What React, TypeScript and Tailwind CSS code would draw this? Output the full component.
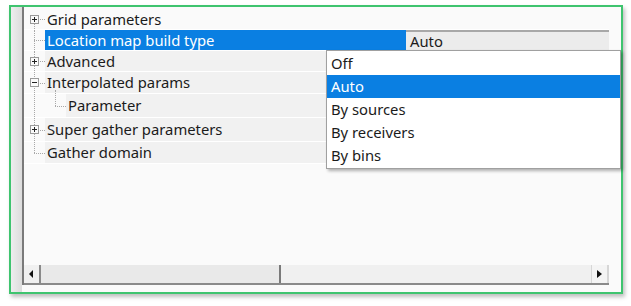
import React from "react";

type Row = {
  label: string;
  depth: number;
  icon?: "plus" | "minus";
  h: string;
  selected?: boolean;
  value?: string;
  first?: boolean;
  last?: boolean;
};

const rows: Row[] = [
  { label: "Grid parameters", depth: 0, icon: "plus", h: "h-[21px]", first: true },
  { label: "Location map build type", depth: 0, h: "h-[21px]", selected: true, value: "Auto" },
  { label: "Advanced", depth: 0, icon: "plus", h: "h-[21px]" },
  { label: "Interpolated params", depth: 0, icon: "minus", h: "h-[22px]" },
  { label: "Parameter", depth: 1, h: "h-[24px]" },
  { label: "Super gather parameters", depth: 0, icon: "plus", h: "h-[24px]" },
  { label: "Gather domain", depth: 0, h: "h-[22px]", last: true },
];

const options = ["Off", "Auto", "By sources", "By receivers", "By bins"];

function Expander({ kind }: { kind: "plus" | "minus" }) {
  return (
    <svg width="9" height="9" viewBox="0 0 9 9" className="shrink-0 relative">
      <rect x="0.5" y="0.5" width="8" height="8" fill="#fafafa" stroke="#9a9a9a" />
      <line x1="2" y1="4.5" x2="7" y2="4.5" stroke="#222" />
      {kind === "plus" && <line x1="4.5" y1="2" x2="4.5" y2="7" stroke="#222" />}
    </svg>
  );
}

function TreeRow({ row }: { row: Row }) {
  return (
    <div className={`flex ${row.h} border-b border-white`}>
      <div className="w-[21px] shrink-0 relative">
        {row.depth === 0 && (
          <>
            {/* vertical connector */}
            <div
              className={`absolute left-[10px] border-l border-dotted border-[#a8a8a8] ${
                row.first ? "top-1/2 bottom-0" : row.last ? "top-0 h-1/2" : "top-0 bottom-0"
              }`}
            />
            <div className="absolute left-[10px] top-1/2 w-[11px] border-t border-dotted border-[#a8a8a8]" />
            {row.icon && (
              <div className="absolute left-[6px] top-0 bottom-0 flex items-center">
                <Expander kind={row.icon} />
              </div>
            )}
          </>
        )}
        {row.depth === 1 && (
          <div className="absolute left-[10px] top-0 bottom-0 border-l border-dotted border-[#a8a8a8]" />
        )}
      </div>
      {row.depth === 1 && (
        <div className="w-[21px] shrink-0 relative">
          <div className="absolute left-[10px] top-[-4px] h-[16px] border-l border-dotted border-[#a8a8a8]" />
          <div className="absolute left-[10px] top-[12px] w-[11px] border-t border-dotted border-[#a8a8a8]" />
        </div>
      )}
      <div
        className={`flex items-center pl-[2px] ${
          row.selected
            ? "w-[361px] bg-[#0a7fe2] text-white"
            : row.depth === 1
            ? "w-[340px] bg-[#f1f1f1]"
            : row.first
            ? "w-[361px]"
            : "w-[361px] bg-[#f1f1f1]"
        }`}
      >
        {row.label}
      </div>
      <div
        className={`flex-1 flex items-center pl-[4px] ${
          row.selected ? "bg-[#ececec] border-t-2 border-[#a8a8a8]" : ""
        }`}
      >
        {row.value}
      </div>
    </div>
  );
}

export default function App() {
  return (
    <div
      className="w-[631px] h-[306px] bg-white relative text-[14.8px] text-[#1b1b1b] leading-none"
      style={{ fontFamily: '"Noto Sans", "Open Sans", sans-serif' }}
    >
      <div className="absolute left-[9px] top-[5px] w-[614px] h-[289px] border-2 border-[#3fc46f] shadow-[2px_3px_4px_rgba(0,0,0,0.25)] bg-[#fafafa] flex">
        <div className="w-[11px] bg-gradient-to-r from-[#eeeeee] to-[#dcdcdc]" />
        <div className="flex-1 flex flex-col border-l-2 border-[#7a7a7a] mb-[7px] pt-[2px] relative">
          <div className="flex pr-[12px]">
            <div className="flex-1 flex flex-col">
              {rows.map((r) => (
                <TreeRow key={r.label} row={r} />
              ))}
            </div>
          </div>
          <div className="flex-1" />
          <div className="h-[20px] flex bg-[#f0f0f0] border-b-2 border-[#8a8a8a] mr-[12px]">
            <div className="w-[17px] flex items-center justify-center border-r-2 border-[#8a8a8a]">
              <svg width="5" height="8" viewBox="0 0 5 8">
                <polygon points="4,0 4,8 0,4" fill="#111" />
              </svg>
            </div>
            <div className="w-[240px] bg-[#e9e9e9] border-r-2 border-[#7a7a7a]" />
            <div className="flex-1" />
            <div className="w-[18px] flex items-center justify-center border-l border-[#d6d6d6] border-r-2 border-[#8a8a8a] bg-[#f4f4f4]">
              <svg width="5" height="8" viewBox="0 0 5 8">
                <polygon points="0,0 0,8 5,4" fill="#111" />
              </svg>
            </div>
          </div>
        </div>
        <div className="absolute left-[315px] top-[43px] w-[295px] h-[119px] bg-white border border-[#a0a0a0] shadow-[2px_2px_3px_rgba(0,0,0,0.3)] flex flex-col py-[1px]">
          {options.map((o) => (
            <div
              key={o}
              className={`h-[23px] flex items-center pl-[4px] ${o === "Auto" ? "bg-[#0a7fe2] text-white" : ""}`}
            >
              {o}
            </div>
          ))}
        </div>
      </div>
    </div>
  );
}
